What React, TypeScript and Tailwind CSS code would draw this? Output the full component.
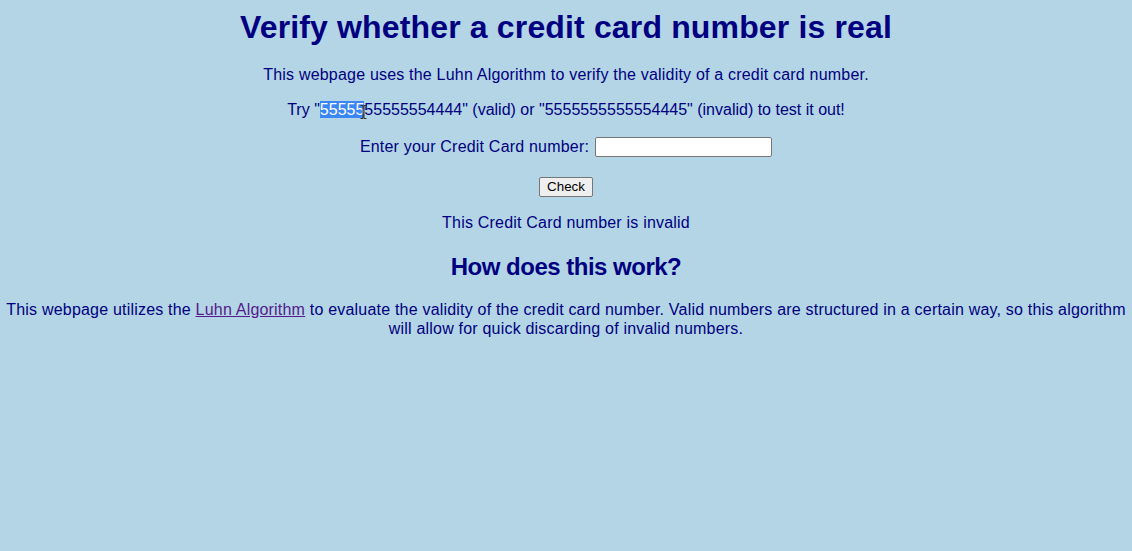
export default function App() {
  return (
    <div className="min-h-[551px] w-full bg-[#b3d5e5] text-[#000080] font-['Liberation_Sans',_sans-serif] flex flex-col items-center text-center tracking-[0.2px]">
      <h1 className="mt-[9px] text-[32px] leading-[37px] font-bold tracking-[0.15px]">
        Verify whether a credit card number is real
      </h1>
      <p className="mt-[19px] text-[16px] leading-[19px]">
        This webpage uses the Luhn Algorithm to verify the validity of a credit card number.
      </p>
      <p className="relative mt-[16px] text-[16px] leading-[19px] tracking-normal">
        Try "<span className="bg-[#3b86f5] text-white">55555</span>55555554444" (valid) or "5555555555554445" (invalid) to test it out!
        <svg className="absolute left-[73px] top-[5px]" width="7" height="14" viewBox="0 0 7 14">
          <path d="M0.5 0.5h2.5v13H0.5M6.5 0.5H4v13h2.5" fill="none" stroke="#333" strokeWidth="1" />
        </svg>
      </p>
      <div className="mt-[17px] h-[21px] flex items-center text-[16px] leading-[19px]">
        <span>Enter your Credit Card number:</span>
        <input
          type="text"
          className="ml-[6px] h-[20px] w-[177px] bg-white border border-[#767676] rounded-[2px] px-1 outline-none"
        />
      </div>
      <button className="mt-[20px] h-[20px] px-[7px] bg-[#efefef] border border-[#767676] rounded-[2px] text-black text-[13.33px] leading-[16px] tracking-normal font-['Liberation_Sans',_sans-serif]">
        Check
      </button>
      <p className="mt-[16px] text-[16px] leading-[19px]">This Credit Card number is invalid</p>
      <h2 className="mt-[21px] text-[24px] leading-[28px] font-bold tracking-[-0.5px]">How does this work?</h2>
      <p className="mt-[19px] text-[16px] leading-[19px]">
        This webpage utilizes the{" "}
        <a href="#" className="text-[#551a8b] underline">
          Luhn Algorithm
        </a>{" "}
        to evaluate the validity of the credit card number. Valid numbers are structured in a certain way, so this algorithm
        <br />
        will allow for quick discarding of invalid numbers.
      </p>
    </div>
  );
}
